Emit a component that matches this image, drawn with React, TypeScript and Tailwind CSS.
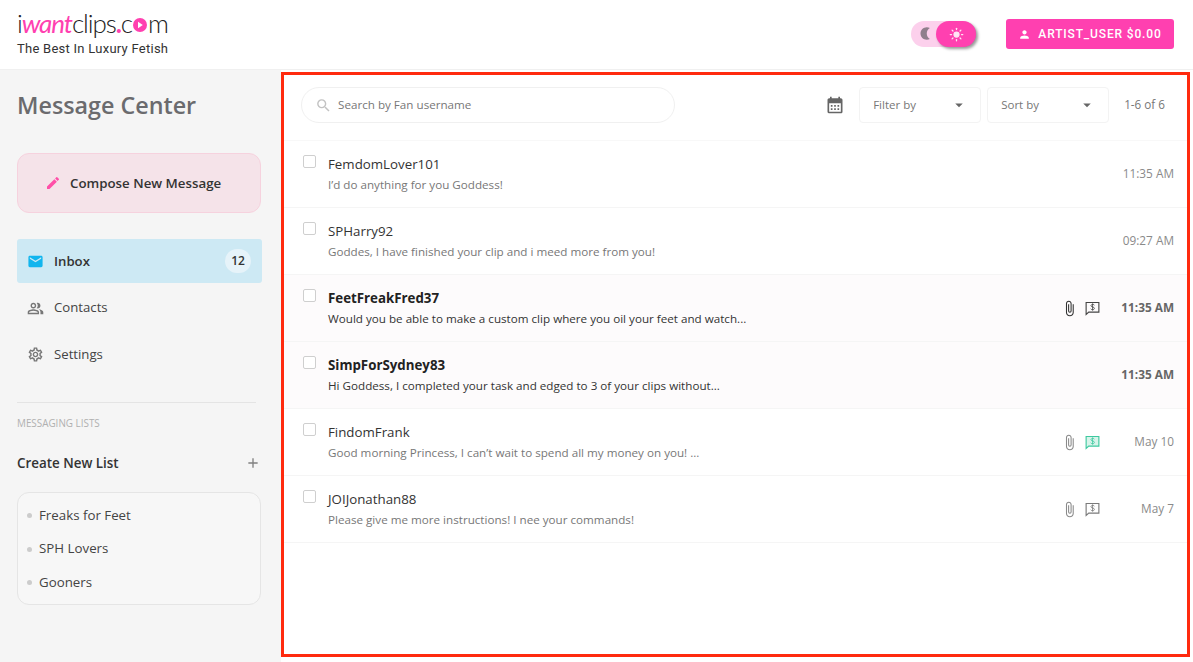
import React from "react";
import {
  MdEdit, MdEmail, MdOutlinePeopleAlt, MdOutlineSettings, MdAdd, MdSearch, MdPerson,
  MdCalendarMonth, MdArrowDropDown, MdOutlineAttachFile, MdBrightness2,
} from "react-icons/md";
import { Sun } from "lucide-react";

const OS = "font-['Open_Sans',sans-serif]";

function ChatDollar({ className, fill }: { className: string; fill?: string }) {
  return (
    <svg viewBox="0 0 16 16" className={className} fill="none">
      <path d="M1.2 1.6H14.8V11.8H4L1.2 14.4Z" stroke="currentColor" strokeWidth="1.2" fill={fill ?? "none"} strokeLinejoin="miter" />
      <path d="M10 4.4C9.6 3.8 9 3.6 8.2 3.6C7.2 3.6 6.4 4.1 6.4 5C6.4 6.9 10 5.9 10 7.9C10 8.8 9.2 9.3 8.1 9.3C7.2 9.3 6.5 9 6.1 8.3M8.1 2.6V10.2" stroke="currentColor" strokeWidth="0.9" />
    </svg>
  );
}

type Row = {
  name: string; text: string; time: string; bold?: boolean; clip?: string; chat?: string; fill?: string;
};
const rows: Row[] = [
  { name: "FemdomLover101", text: "I’d do anything for you Goddess!", time: "11:35 AM" },
  { name: "SPHarry92", text: "Goddes, I have finished your clip and i meed more from you!", time: "09:27 AM" },
  { name: "FeetFreakFred37", text: "Would you be able to make a custom clip where you oil your feet and watch...", time: "11:35 AM", bold: true, clip: "text-[#333333]", chat: "text-[#444444]" },
  { name: "SimpForSydney83", text: "Hi Goddess, I completed your task and edged to 3 of your clips without...", time: "11:35 AM", bold: true },
  { name: "FindomFrank", text: "Good morning Princess, I can’t wait to spend all my money on you! ...", time: "May 10", clip: "text-[#8a8a8a]", chat: "text-[#3ec9a0]", fill: "#d8f4ea" },
  { name: "JOIJonathan88", text: "Please give me more instructions! I nee your commands!", time: "May 7", clip: "text-[#8a8a8a]", chat: "text-[#7a7a7a]" },
];

function MessageRow({ r }: { r: Row }) {
  return (
    <div className={`h-[67px] flex border-b border-[#f5f5f5] ${r.bold ? "bg-[#fdfbfc]" : "bg-white"}`}>
      <div className="w-[13px] h-[13px] ml-[19px] mt-[14px] border border-[#cfcfcf] rounded-[2px] bg-white shrink-0" />
      <div className="ml-[12px] flex-1 min-w-0 pt-[13px]">
        <div className={`text-[13.3px] leading-[20px] ${r.bold ? "font-bold text-[#222222]" : "text-[#333333]"}`}>{r.name}</div>
        <div className={`mt-[1px] text-[11.65px] leading-[20px] ${r.bold ? "text-[#333333]" : "text-[#777777]"}`}>{r.text}</div>
      </div>
      <div className="flex items-center pr-[13px] shrink-0">
        {r.clip && <MdOutlineAttachFile className={`w-[17px] h-[17px] ${r.clip}`} />}
        {r.chat && <ChatDollar fill={r.fill} className={`w-[15px] h-[15px] ml-[7px] ${r.chat}`} />}
        <div className={`w-[74px] text-right text-[11.8px] ${r.bold ? "font-bold text-[#666666]" : "text-[#8a8a8a]"}`}>{r.time}</div>
      </div>
    </div>
  );
}

function Select({ label, w }: { label: string; w: string }) {
  return (
    <div className={`${w} h-[36px] border border-[#f3f3f3] rounded-[4px] flex items-center pl-[13px] pr-[12px] justify-between text-[11.5px] text-[#777777]`}>
      <span>{label}</span>
      <MdArrowDropDown className="w-[18px] h-[18px] text-[#666666]" />
    </div>
  );
}

export default function App() {
  return (
    <div className={`w-[1193px] h-[662px] overflow-hidden flex flex-col bg-white ${OS}`}>
      <header className="h-[70px] shrink-0 flex items-start bg-white border-b border-[#f0f0f0] pl-[17px] pr-[19px]">
        <div className="pt-[8px] flex-1">
          <div className="font-['Lato',sans-serif] font-light text-[26px] leading-[30px] tracking-[-1.1px] text-[#222222] flex items-center h-[30px]">
            <span>i</span>
            <span className="text-[#ff40b0] italic font-normal">want</span>
            <span>clips</span>
            <span className="text-[#ff40b0] font-bold">.</span>
            <span>c</span>
            <span className="w-[14px] h-[14px] mx-[1px] mt-[3px] rounded-full bg-[#ff40b0] flex items-center justify-center">
              <svg viewBox="0 0 10 10" className="w-[8px] h-[8px]"><path d="M2.5 1L8.5 5L2.5 9Z" fill="#ffffff" /></svg>
            </span>
            <span>m</span>
          </div>
          <div className="font-['Roboto',sans-serif] text-[13px] tracking-[0.26px] leading-[17px] mt-[2px] text-[#333333]">The Best In Luxury Fetish</div>
        </div>
        <div className="relative w-[65px] h-[26px] mt-[21px] rounded-full bg-[#fcd0ec]">
          <MdBrightness2 className="absolute left-[7px] top-[5px] w-[15px] h-[15px] text-[#8f7f8c] -scale-x-100" />
          <div className="absolute left-[25px] top-0 w-[40px] h-[26px] rounded-full bg-[#ff40b0] shadow-[2px_2px_3px_rgba(0,0,0,0.4)] flex items-center justify-center">
            <Sun className="w-[15px] h-[15px] text-[#ffe6f5]" fill="currentColor" />
          </div>
        </div>
        <div className="ml-[30px] mt-[19px] w-[168px] h-[30px] rounded-[3px] bg-[#ff40b0] flex items-center justify-center text-white font-['Roboto',sans-serif] font-medium text-[12px] tracking-[0.85px]">
          <MdPerson className="w-[13px] h-[13px] mr-[7px]" />
          ARTIST_USER $0.00
        </div>
      </header>

      <div className="flex flex-1 min-h-0">
        <aside className="w-[281px] shrink-0 bg-[#f5f5f5] pl-[17px] pr-[20px]">
          <h1 className="text-[23.3px] leading-[32px] font-semibold text-[#6b6b6e] mt-[19px]">Message Center</h1>
          <div className="mt-[32px] h-[60px] rounded-[12px] bg-[#f5e3e9] border border-[#f6d2de] flex items-center pl-[27px] text-[#333333] font-semibold text-[13.3px]">
            <MdEdit className="w-[16px] h-[16px] text-[#ff4fa8] mr-[9px]" />
            <span className="pt-[1px]">Compose New Message</span>
          </div>
          <div className="mt-[26px] h-[44px] w-[245px] rounded-[3px] bg-[#cde9f4] flex items-center pl-[10px] pr-[11px] text-[13.2px] font-semibold text-[#333333]">
            <MdEmail className="w-[17px] h-[17px] text-[#11b5ee] mr-[10px]" />
            <span className="flex-1 pt-[1px]">Inbox</span>
            <span className="w-[26px] h-[24px] rounded-full bg-[#e6f3f9] flex items-center justify-center text-[12px]">12</span>
          </div>
          <div className="mt-[2px] h-[46px] flex items-center pl-[10px] text-[13.2px] text-[#444444]">
            <MdOutlinePeopleAlt className="w-[17px] h-[17px] text-[#777777] mr-[10px]" />
            <span>Contacts</span>
          </div>
          <div className="h-[46px] flex items-center pl-[10px] text-[13.2px] text-[#444444]">
            <MdOutlineSettings className="w-[17px] h-[17px] text-[#777777] mr-[10px]" />
            <span className="pt-[1px]">Settings</span>
          </div>
          <div className="mt-[25px] mr-[5px] border-t border-[#e4e4e4]" />
          <div className="mt-[14px] text-[9.9px] leading-[12px] text-[#b0b0b0]">MESSAGING LISTS</div>
          <div className="mt-[24px] h-[20px] flex items-center justify-between text-[13.4px] font-semibold text-[#333333]">
            <span>Create New List</span>
            <MdAdd className="w-[16px] h-[16px] text-[#808080]" />
          </div>
          <div className="mt-[19px] h-[113px] rounded-[12px] bg-[#f7f7f7] border border-[#e5e5e5] pl-[9px] pt-[6px] text-[13.3px] text-[#444444]">
            {["Freaks for Feet", "SPH Lovers", "Gooners"].map((t) => (
              <div key={t} className="h-[33.5px] flex items-center">
                <span className="w-[5px] h-[5px] rounded-full bg-[#cccccc] mr-[7px]" />
                {t}
              </div>
            ))}
          </div>
        </aside>

        <main className="flex-1 min-w-0 mt-[2px] mr-[3px] mb-[5px] border-[3px] border-[#ff2a0e] bg-white">
          <div className="h-[66px] flex items-start pl-[17px] pr-[22px] pt-[12px] border-b border-[#f8f8f8]">
            <div className="w-[374px] h-[36px] rounded-full border border-[#f0f0f0] flex items-center pl-[13px] text-[11.65px] text-[#777777]">
              <MdSearch className="w-[17px] h-[17px] text-[#c2c2c2] mr-[6px]" />
              Search by Fan username
            </div>
            <div className="flex-1" />
            <MdCalendarMonth className="w-[20px] h-[20px] mt-[8px] mr-[14px] text-[#666666]" />
            <Select label="Filter by" w="w-[122px]" />
            <div className="w-[6px]" />
            <Select label="Sort by" w="w-[122px]" />
            <div className="w-[15px]" />
            <div className="h-[36px] flex items-center text-[11.7px] text-[#777777]">1-6 of 6</div>
          </div>
          {rows.map((r) => (
            <MessageRow key={r.name} r={r} />
          ))}
        </main>
      </div>
    </div>
  );
}
